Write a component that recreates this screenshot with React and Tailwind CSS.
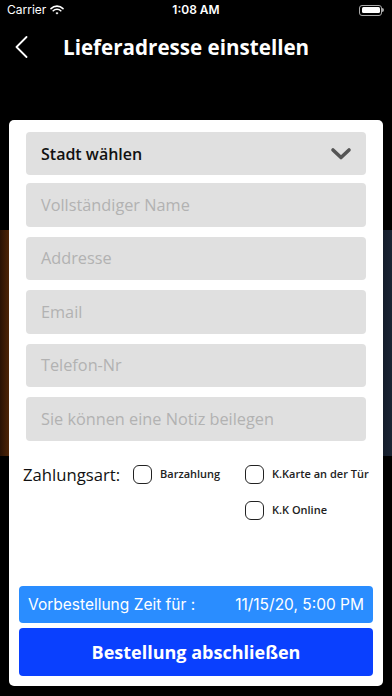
import React from "react";

const Field = ({ placeholder }) => (
    <div className="h-[43.5px] w-full rounded-[4px] bg-[#e0e0e0] flex items-center px-[15px] text-[16.3px] text-[#b2b2b2]">
        {placeholder}
    </div>
);

const Check = ({ label }) => (
    <div className="flex items-center gap-[8px]">
        <div className="w-[19px] h-[19px] rounded-[6px] border-[1.5px] border-[#222]"></div>
        <span className="text-[11px] font-semibold text-[#222]">{label}</span>
    </div>
);

const App = () => {
    return (
        <div className="relative w-[392px] h-[696px] bg-black overflow-hidden flex flex-col font-['Open_Sans',sans-serif]">
            {/* dim background photo behind the card */}
            <div className="absolute left-0 right-0 top-[230px] h-[226px] bg-[linear-gradient(90deg,#2a1204_0%,#5a2a07_3%,#120804_10%,#000_50%,#080b14_92%,#1a2434_100%)]"></div>

            <div className="relative h-[20px] flex items-center justify-between px-[7px] text-white text-[12px] font-['Inter',sans-serif]">
                <div className="flex items-center gap-[4px] w-[80px]">
                    <span>Carrier</span>
                    <svg width="14" height="10" viewBox="0 0 14 10">
                        <path d="M1 3.6a8.5 8.5 0 0 1 12 0" stroke="white" strokeWidth="1.6" fill="none" strokeLinecap="round" />
                        <path d="M3.2 5.8a5.4 5.4 0 0 1 7.6 0" stroke="white" strokeWidth="1.6" fill="none" strokeLinecap="round" />
                        <path d="M5.5 8a2.2 2.2 0 0 1 3 0L7 9.5z" fill="white" />
                    </svg>
                </div>
                <span className="font-semibold">1:08 AM</span>
                <div className="w-[80px] flex justify-end pr-[1px]">
                    <div className="flex items-center">
                        <div className="w-[23px] h-[11px] rounded-[3px] border border-[#aaa] p-[1.5px]">
                            <div className="w-full h-full bg-white rounded-[1.5px]"></div>
                        </div>
                        <div className="w-[1.5px] h-[4px] bg-[#aaa] rounded-r"></div>
                    </div>
                </div>
            </div>

            <div className="relative h-[54px] flex items-center">
                <svg className="ml-[15px]" width="13" height="22" viewBox="0 0 13 22">
                    <path d="M11.5 1L1.5 11l10 10" stroke="white" strokeWidth="1.8" fill="none" strokeLinecap="round" strokeLinejoin="round" />
                </svg>
                <h1 className="ml-[35px] text-white text-[20.6px] font-bold">Lieferadresse einstellen</h1>
            </div>

            <div className="relative mt-[46px] mx-[9px] h-[566px] bg-white rounded-[5px] flex flex-col">
                <div className="px-[17px] pt-[12px] flex flex-col">
                    <div className="h-[43px] rounded-[4px] bg-[#e0e0e0] flex items-center justify-between pl-[15px] pr-[14px]">
                        <span className="text-[16px] font-semibold text-[#111]">Stadt wählen</span>
                        <svg width="22" height="14" viewBox="0 0 22 14">
                            <path d="M3 3l8 7.5L19 3" stroke="#555" strokeWidth="3.6" fill="none" strokeLinecap="round" strokeLinejoin="round" />
                        </svg>
                    </div>
                    <div className="mt-[8px] flex flex-col gap-[10px]">
                        <Field placeholder="Vollständiger Name" />
                        <Field placeholder="Addresse" />
                        <Field placeholder="Email" />
                        <Field placeholder="Telefon-Nr" />
                        <Field placeholder="Sie können eine Notiz beilegen" />
                    </div>
                </div>

                <div className="mt-[24px] pl-[14px] flex items-start">
                    <span className="text-[16.7px] text-[#111] leading-[20px] w-[110px]">Zahlungsart:</span>
                    <div className="grid grid-cols-[112px_auto] gap-y-[17px]">
                        <Check label="Barzahlung" />
                        <Check label="K.Karte an der Tür" />
                        <div></div>
                        <Check label="K.K Online" />
                    </div>
                </div>

                <div className="mt-auto px-[10px] pb-[10px] flex flex-col gap-[5px]">
                    <div className="h-[37px] rounded-[4px] bg-[#2a8dff] flex items-center justify-between px-[9px] text-white text-[15.5px] font-['Inter',sans-serif]">
                        <span>Vorbestellung Zeit für :</span>
                        <span>11/15/20, 5:00 PM</span>
                    </div>
                    <button className="h-[48px] rounded-[4px] bg-[#0a40fe] text-white text-[18px] font-bold">
                        Bestellung abschließen
                    </button>
                </div>
            </div>
        </div>
    );
};

export default App;
